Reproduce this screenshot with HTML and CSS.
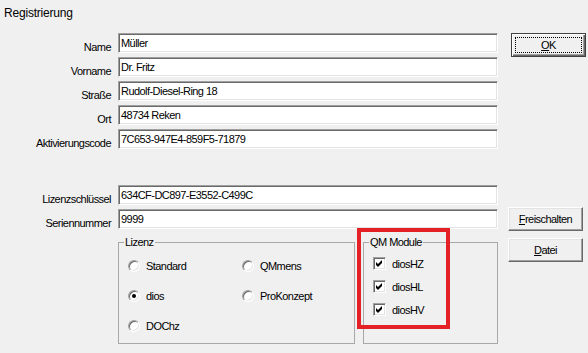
FILE: index.html
```html
<!DOCTYPE html>
<html lang="de">
<head>
    <meta charset="UTF-8">
    <meta name="viewport" content="width=device-width, initial-scale=1.0">
    <title>Registrierung</title>
    <link rel="stylesheet" href="styles.css">
</head>
<body>
    <div class="window">
        <div class="title">Registrierung</div>
        <div class="dialog">
            <div class="main">
                <div class="fields">
                    <div class="row"><label>Name</label><input class="field" value="Müller"></div>
                    <div class="row"><label>Vorname</label><input class="field" value="Dr. Fritz"></div>
                    <div class="row"><label>Straße</label><input class="field" value="Rudolf-Diesel-Ring 18"></div>
                    <div class="row"><label>Ort</label><input class="field" value="48734 Reken"></div>
                    <div class="row"><label>Aktivierungscode</label><input class="field" value="7C653-947E4-859F5-71879"></div>
                </div>
                <div class="fields keys">
                    <div class="row"><label>Lizenzschlüssel</label><input class="field" value="634CF-DC897-E3552-C499C"></div>
                    <div class="row"><label>Seriennummer</label><input class="field" value="9999"></div>
                </div>
                <div class="groups">
                    <fieldset class="group licence">
                        <legend>Lizenz</legend>
                        <div class="options">
                            <div class="option"><span class="radio"></span>Standard</div>
                            <div class="option"><span class="radio"></span>QMmens</div>
                            <div class="option"><span class="radio checked"></span>dios</div>
                            <div class="option"><span class="radio"></span>ProKonzept</div>
                            <div class="option"><span class="radio"></span>DOChz</div>
                        </div>
                    </fieldset>
                    <fieldset class="group modules">
                        <legend>QM Module</legend>
                        <div class="checks">
                            <div class="option"><span class="box"><svg width="7" height="7" viewBox="0 0 7 7"><polygon points="0,2 2,4 6,0 6,3 2,7 0,5"/></svg></span>diosHZ</div>
                            <div class="option"><span class="box"><svg width="7" height="7" viewBox="0 0 7 7"><polygon points="0,2 2,4 6,0 6,3 2,7 0,5"/></svg></span>diosHL</div>
                            <div class="option"><span class="box"><svg width="7" height="7" viewBox="0 0 7 7"><polygon points="0,2 2,4 6,0 6,3 2,7 0,5"/></svg></span>diosHV</div>
                        </div>
                    </fieldset>
                </div>
            </div>
            <div class="side">
                <button class="btn default"><span class="focus"><u>O</u>K</span></button>
                <button class="btn unlock"><u>F</u>reischalten</button>
                <button class="btn file"><u>D</u>atei</button>
            </div>
        </div>
        <div class="marker"></div>
    </div>
</body>
</html>
```

FILE: styles.css
```css
body {
    margin: 0;
    background-color: #f0f0f0;
    font-family: "Liberation Sans", Arial, sans-serif;
    font-size: 11px;
    letter-spacing: -0.55px;
    color: #000;
}

.window {
    position: relative;
    width: 588px;
    height: 353px;
}

.title {
    height: 14px;
    padding: 6px 0 0 4px;
    font-size: 12px;
    line-height: 14px;
    letter-spacing: -0.2px;
}

.dialog {
    display: flex;
    margin-top: 13px;
}

.main {
    width: 498px;
}

.fields {
    display: flex;
    flex-direction: column;
    gap: 4px;
}

.keys {
    margin-top: 36px;
}

.row {
    display: flex;
    height: 20px;
}

.row label {
    width: 111px;
    margin-right: 7px;
    padding-top: 8px;
    line-height: 13px;
    text-align: right;
    white-space: nowrap;
}

.field {
    width: 380px;
    height: 20px;
    box-sizing: border-box;
    margin: 0;
    padding: 0 2px;
    border: 1px solid;
    border-color: #a0a0a0 #fff #fff #a0a0a0;
    box-shadow: inset 1px 1px 0 #696969, inset -1px -1px 0 #e3e3e3;
    background-color: #fff;
    font: inherit;
    letter-spacing: inherit;
    color: #000;
    outline: none;
}

.groups {
    display: flex;
    gap: 8px;
    margin: 7px 0 0 118px;
}

.group {
    height: 108px;
    box-sizing: border-box;
    min-width: 0;
    margin: 0;
    padding: 0;
    border: 1px solid #a8a8a8;
}

.group legend {
    margin-left: 5px;
    padding: 0 1px;
    line-height: 13px;
}

.licence {
    width: 237px;
}

.modules {
    width: 135px;
}

.options {
    display: grid;
    grid-template-columns: 114px auto;
    grid-auto-rows: 13px;
    row-gap: 17px;
    padding: 10px 0 0 9px;
}

.checks {
    display: grid;
    grid-auto-rows: 13px;
    row-gap: 10px;
    padding: 8px 0 0 9px;
}

.option {
    display: flex;
    align-items: center;
    gap: 6px;
    white-space: nowrap;
}

.radio {
    position: relative;
    flex: none;
    width: 12px;
    height: 12px;
    box-sizing: border-box;
    border: 1px solid;
    border-color: #a0a0a0 #fff #fff #a0a0a0;
    border-radius: 50%;
    background-color: #fff;
    box-shadow: inset 1px 1px 0 #696969, inset -1px -1px 0 #e3e3e3;
}

.radio.checked::after {
    content: "";
    position: absolute;
    left: 3px;
    top: 3px;
    width: 4px;
    height: 4px;
    border-radius: 50%;
    background-color: #000;
}

.box {
    display: flex;
    align-items: center;
    justify-content: center;
    flex: none;
    width: 13px;
    height: 13px;
    box-sizing: border-box;
    border: 1px solid;
    border-color: #a0a0a0 #fff #fff #a0a0a0;
    background-color: #fff;
    box-shadow: inset 1px 1px 0 #696969, inset -1px -1px 0 #e3e3e3;
}

.box svg {
    fill: #000;
}

.side {
    display: flex;
    flex-direction: column;
    align-items: flex-start;
    padding-left: 10px;
}

.btn {
    width: 75px;
    height: 24px;
    box-sizing: border-box;
    margin: 0;
    padding: 0;
    border: 1px solid;
    border-color: #fff #696969 #696969 #fff;
    box-shadow: inset -1px -1px 0 #a0a0a0, inset 1px 1px 0 #e3e3e3;
    background-color: #f0f0f0;
    font: inherit;
    letter-spacing: inherit;
    color: #000;
}

.default {
    margin-left: 3px;
    border: 1px solid #404040;
    box-shadow: inset 1px 1px 0 #fff, inset -1px -1px 0 #696969, inset -2px -2px 0 #a0a0a0;
}

.focus {
    display: block;
    height: 16px;
    box-sizing: border-box;
    margin: 0 3px;
    border: 1px dotted #000;
    line-height: 14px;
}

.unlock {
    margin-top: 150px;
}

.file {
    margin-top: 7px;
}

.marker {
    position: absolute;
    left: 357px;
    top: 228px;
    width: 93px;
    height: 101px;
    box-sizing: border-box;
    border: 4px solid #e42127;
}
```
